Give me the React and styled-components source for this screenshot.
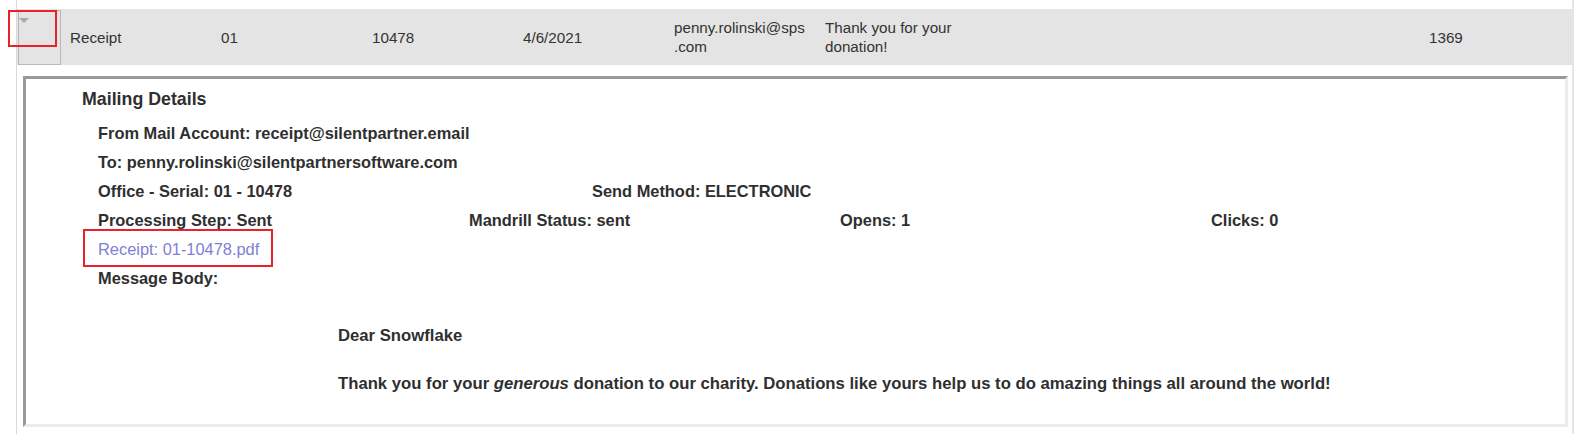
import styled, { createGlobalStyle } from "styled-components";

const mailing = {
  type: "Receipt",
  office: "01",
  serial: "10478",
  date: "4/6/2021",
  amount: "1369",
  from: "receipt@silentpartner.email",
  to: "penny.rolinski@silentpartnersoftware.com",
  sendMethod: "ELECTRONIC",
  step: "Sent",
  mandrill: "sent",
  opens: 1,
  clicks: 0,
};

const GlobalStyle = createGlobalStyle`
  body {
    margin: 0;
    background: #fff;
    font-family: "Liberation Sans", Arial, sans-serif;
    color: #333;
  }
`;

const App = () => {
  const { type, office, serial, date, amount } = mailing;

  return (
    <>
      <GlobalStyle />
      <Frame>
        <Row>
          <ToggleCell>
            <Caret />
            <Annotation $top={-1} $left={-11} $width={49} $height={37} />
          </ToggleCell>
          <Cell>{type}</Cell>
          <Cell>{office}</Cell>
          <Cell>{serial}</Cell>
          <Cell>{date}</Cell>
          <Cell>
            penny.rolinski@sps
            <wbr />
            .com
          </Cell>
          <Cell>Thank you for your donation!</Cell>
          <Cell $col={11}>{amount}</Cell>
        </Row>

        <DetailArea>
          <Panel>
            <Heading>Mailing Details</Heading>
            <Details>
              <Line>From Mail Account: {mailing.from}</Line>
              <Line>To: {mailing.to}</Line>
              <Line as="div">
                <Columns $cols="494px 494px 1fr">
                  <span>
                    Office - Serial: {office} - {serial}
                  </span>
                  <span>Send Method: {mailing.sendMethod}</span>
                </Columns>
              </Line>
              <Line as="div">
                <Columns $cols="371px 371px 371px 1fr">
                  <span>Processing Step: {mailing.step}</span>
                  <span>Mandrill Status: {mailing.mandrill}</span>
                  <span>Opens: {mailing.opens}</span>
                  <span>Clicks: {mailing.clicks}</span>
                </Columns>
              </Line>
              <Line as="div">
                <FileLink href="#">
                  Receipt: 01-10478.pdf
                  <LinkMark />
                </FileLink>
              </Line>
              <Line>Message Body:</Line>

              <Message>
                <Para>Dear Snowflake</Para>
                <Para $gap>
                  Thank you for your <em>generous</em> donation to our
                  charity. Donations like yours help us to do amazing things
                  all around the world!
                </Para>
              </Message>
            </Details>
          </Panel>
        </DetailArea>
      </Frame>
    </>
  );
};

const Frame = styled.div`
  box-sizing: border-box;
  margin-left: 16px;
  width: 1558px;
  min-height: 434px;
  padding-top: 9px;
  border-left: 1px solid #dadada;
  border-right: 2px solid #e6e6e6;
`;

const Row = styled.div`
  display: grid;
  grid-template-columns: 44px repeat(9, 151px) 1fr;
  height: 56px;
  background-color: #e4e4e4;
  font-size: 15.2px;
  line-height: 19px;
  color: #333;
`;

const ToggleCell = styled.div`
  position: relative;
  box-sizing: border-box;
  margin: 1px 0 0 1px;
  width: 43px;
  height: 55px;
  border: 1px solid #b8b8b8;
`;

const Caret = styled.div`
  margin-top: 7px;
  width: 0;
  height: 0;
  border-left: 5px solid transparent;
  border-right: 5px solid transparent;
  border-top: 5px solid #a9a9a9;
`;

const Annotation = styled.div`
  position: absolute;
  box-sizing: border-box;
  top: ${(p) => p.$top}px;
  left: ${(p) => p.$left}px;
  width: ${(p) => p.$width}px;
  height: ${(p) => p.$height}px;
  border: 2px solid #e8212b;
`;

const Cell = styled.div`
  align-self: center;
  padding: 0 9px;
  grid-column: ${(p) => p.$col || "auto"};
`;

const DetailArea = styled.div`
  padding: 11px 4px 0 6px;
`;

const Panel = styled.div`
  padding: 9px 0 30px 56px;
  border-style: solid;
  border-width: 3px;
  border-color: #999 #ebebeb #ebebeb #999;
`;

const Heading = styled.div`
  font-size: 17.8px;
  line-height: 22px;
  font-weight: bold;
  color: #2f2f2f;
`;

const Details = styled.div`
  margin-top: 9px;
  padding-left: 16px;
  font-size: 16.4px;
  line-height: 29px;
  font-weight: bold;
  color: #2f2f2f;
`;

const Line = styled.div`
  height: 29px;
`;

const Columns = styled.div`
  display: grid;
  grid-template-columns: ${(p) => p.$cols};
`;

const FileLink = styled.a`
  position: relative;
  display: inline-block;
  font-weight: normal;
  color: #8080d6;
  text-decoration: none;
`;

const LinkMark = styled.span`
  position: absolute;
  top: -6px;
  bottom: -3px;
  left: -15px;
  right: -14px;
  border: 2px solid #e8212b;
`;

const Message = styled.div`
  margin: 33px 0 0 240px;
  font-size: 16.7px;
`;

const Para = styled.p`
  margin: ${(p) => (p.$gap ? "27.6px" : "0")} 0 0;
  line-height: 20px;
`;

export default App;
